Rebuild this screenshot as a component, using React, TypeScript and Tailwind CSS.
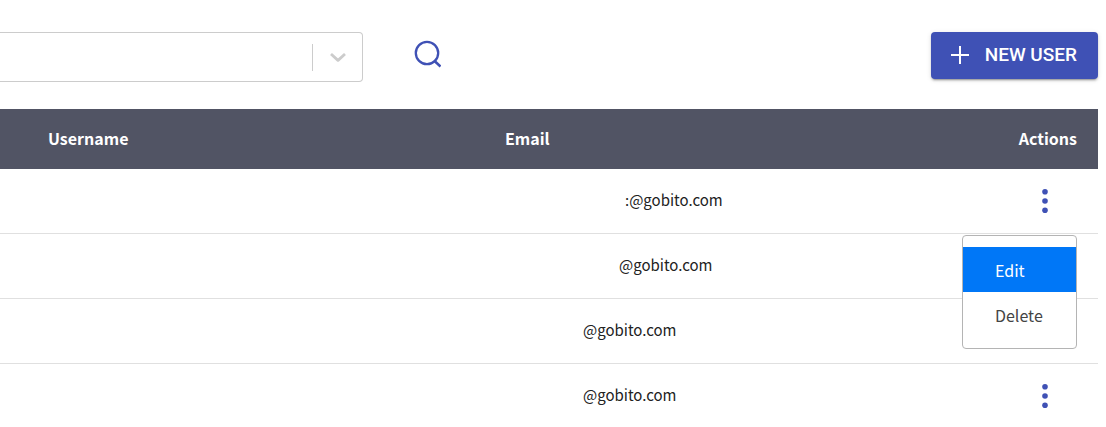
import { useState } from "react";

type User = {
  id: number;
  username: string;
  indent: string;
  email: string;
};

const users: User[] = [
  { id: 1, username: "", indent: "pl-[120px]", email: ":@gobito.com" },
  { id: 2, username: "", indent: "pl-[114px]", email: "@gobito.com" },
  { id: 3, username: "", indent: "pl-[78px]", email: "@gobito.com" },
  { id: 4, username: "", indent: "pl-[78px]", email: "@gobito.com" },
];

function ActionMenu() {
  return (
    <div
      role="menu"
      className="absolute right-[21px] top-[66px] z-10 w-[115px] rounded border border-[#b4b4b4] bg-white py-[11px] text-left"
    >
      <button
        role="menuitem"
        className="block h-[45px] w-full bg-[#0077f7] pl-8 text-left text-base leading-6 text-white"
      >
        Edit
      </button>
      <button
        role="menuitem"
        className="block h-[45px] w-full pl-8 text-left text-base leading-6 text-[#444]"
      >
        Delete
      </button>
    </div>
  );
}

export default function App() {
  const [openId, setOpenId] = useState<number | null>(1);

  const toggleMenu = (id: number) => {
    setOpenId((prev) => (prev === id ? null : id));
  };

  return (
    <main className="bg-white pr-2 font-['Noto_Sans_CJK_SC',sans-serif]">
      <div className="flex h-[109px] items-start pt-8">
        <div className="grid w-[363px] items-center">
          <select
            aria-label="Filter users"
            className="col-start-1 row-start-1 h-[50px] w-full appearance-none rounded-r border border-l-0 border-[#ccc] bg-white px-3"
          />
          <div className="pointer-events-none col-start-1 row-start-1 flex items-center justify-self-end pr-4 text-[#ccc]">
            <span className="mr-4 h-[27px] w-px bg-[#ccc]" />
            <svg className="h-[18px] w-[18px]" viewBox="0 0 18 18" fill="none" stroke="currentColor" strokeWidth="2.8">
              <path d="M2 6 9 12.4 16 6" strokeLinejoin="round" />
            </svg>
          </div>
        </div>
        <button aria-label="Search" className="ml-[50px] mt-2 text-[#3f51b5]">
          <svg className="h-7 w-7" viewBox="0 0 28 28" fill="none" stroke="currentColor" strokeWidth="2.3">
            <circle cx="14" cy="13" r="11.2" />
            <path d="M21 20.5 27.5 26.5" strokeWidth="2.6" />
          </svg>
        </button>
        <button className="ml-auto flex h-[47px] items-center rounded bg-[#3f51b5] pb-px pl-5 pr-[21px] font-['Roboto',sans-serif] text-[19px] font-medium text-white shadow-[0_3px_1px_-2px_rgba(0,0,0,0.2),0_2px_2px_0_rgba(0,0,0,0.14),0_1px_5px_0_rgba(0,0,0,0.12)]">
          <svg className="mr-4 h-[18px] w-[18px]" viewBox="0 0 18 18" stroke="currentColor" strokeWidth="2">
            <path d="M9 0V18M0 9H18" />
          </svg>
          NEW USER
        </button>
      </div>

      <table className="w-full table-fixed border-collapse">
        <thead>
          <tr className="h-[60px] bg-[#515464] text-base leading-6 text-white">
            <th className="w-[457px] pb-[2px] pl-12 text-left font-bold">Username</th>
            <th className="pb-[2px] pl-12 text-left font-bold">Email</th>
            <th className="w-[160px] pb-[2px] pr-[21px] text-right font-bold">Actions</th>
          </tr>
        </thead>
        <tbody>
          {users.map((user) => (
            <tr key={user.id} className="border-b border-[#e0e0e0] text-[15px] leading-6 text-[#222] last:border-b-0">
              <td className="pb-[2px] pl-12">{user.username}</td>
              <td className="pb-[2px] pl-12">
                <div className={user.indent}>{user.email}</div>
              </td>
              <td className="relative p-0">
                <div className="flex h-16 items-center justify-end pr-[41px]">
                  <button
                    aria-label="User actions"
                    aria-expanded={openId === user.id}
                    onClick={() => toggleMenu(user.id)}
                    className="px-2 text-[#3f51b5]"
                  >
                    <svg className="h-6 w-2" viewBox="0 0 8 24" fill="currentColor">
                      <circle cx="4" cy="2.8" r="2.8" />
                      <circle cx="4" cy="12" r="2.8" />
                      <circle cx="4" cy="21.2" r="2.8" />
                    </svg>
                  </button>
                </div>
                {openId === user.id && <ActionMenu />}
              </td>
            </tr>
          ))}
        </tbody>
      </table>
    </main>
  );
}
